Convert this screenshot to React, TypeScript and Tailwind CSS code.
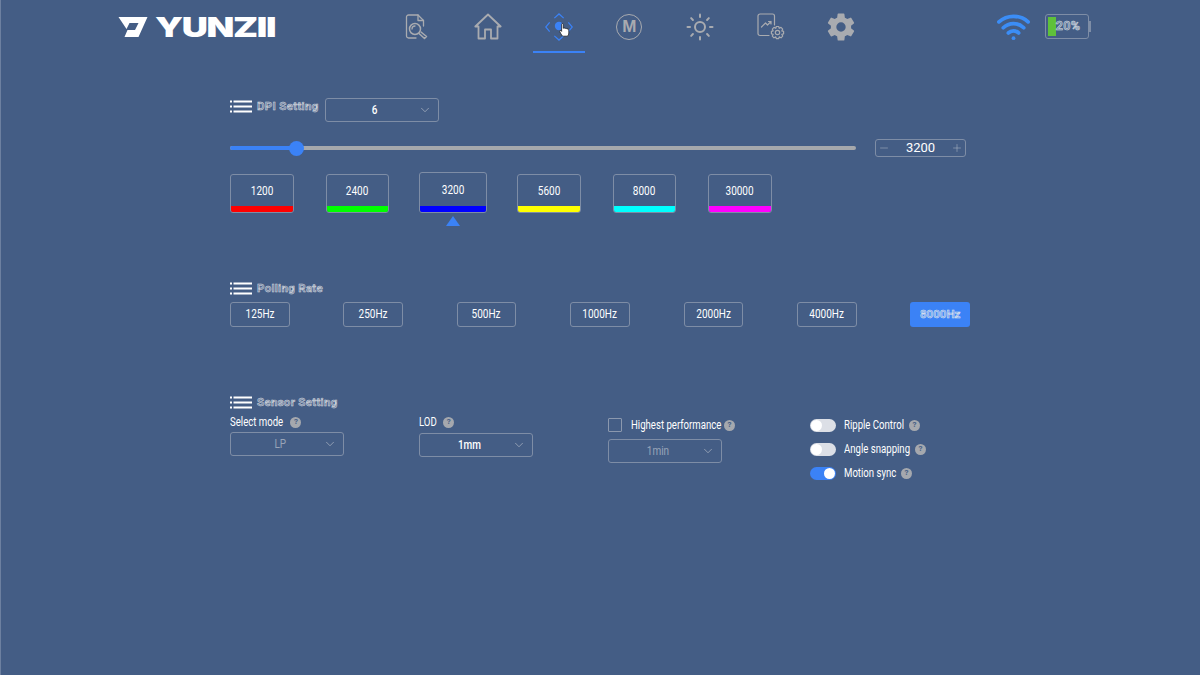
import { useState } from 'react';
import { ChevronDown, Minus, Plus, Sun, Wifi } from 'lucide-react';
import { IoSettingsSharp } from 'react-icons/io5';

const dpiLevels = [
  { value: '1200', color: 'bg-[#ff0000]' },
  { value: '2400', color: 'bg-[#00ff00]' },
  { value: '3200', color: 'bg-[#0000ff]', active: true },
  { value: '5600', color: 'bg-[#ffff00]' },
  { value: '8000', color: 'bg-[#00ffff]' },
  { value: '30000', color: 'bg-[#ff00ff]' },
];

const rates = ['125Hz', '250Hz', '500Hz', '1000Hz', '2000Hz', '4000Hz', '8000Hz'];

// the app's labels are a squeezed sans
function Narrow({ children, className = '' }: { children: React.ReactNode; className?: string }) {
  return <span className={`inline-block scale-x-[0.8] whitespace-nowrap ${className}`}>{children}</span>;
}

function MenuIcon() {
  return (
    <svg width="22" height="13" viewBox="0 0 22 13" fill="#fff" className="shrink-0">
      <rect x="0" y="0.5" width="2" height="2" />
      <rect x="3.5" y="0.5" width="18.5" height="2" />
      <rect x="0" y="5.5" width="2" height="2" />
      <rect x="3.5" y="5.5" width="18.5" height="2" />
      <rect x="0" y="10.5" width="2" height="2" />
      <rect x="3.5" y="10.5" width="18.5" height="2" />
    </svg>
  );
}

function SectionTitle({ label }: { label: string }) {
  return (
    <div className="flex items-center gap-[5px]">
      <MenuIcon />
      <span className="text-[11.5px] font-bold leading-none tracking-[0.3px] text-[#6f83a3] [-webkit-text-stroke:0.5px_#d5d8de]">
        {label}
      </span>
    </div>
  );
}

function Help() {
  return (
    <span className="flex h-[11px] w-[11px] shrink-0 items-center justify-center rounded-full bg-[#a5a8ae] text-[8px] font-bold leading-none text-[#445d85]">
      ?
    </span>
  );
}

function Select({ value, dim, className = '' }: { value: string; dim?: boolean; className?: string }) {
  return (
    <div className={`relative flex h-[24px] w-[114px] items-center justify-center rounded-[3px] border border-[#7e8da6] ${className}`}>
      <span className={`-ml-[14px] text-[12.500px] ${dim ? 'text-[#98a4b8]' : 'font-medium text-white'}`}>
        <Narrow>{value}</Narrow>
      </span>
      <ChevronDown size={14} strokeWidth={1} className="absolute right-[6px] top-[4px] text-[#c5cad3]" />
    </div>
  );
}

function Toggle({ on, label, labelWidth }: { on?: boolean; label: string; labelWidth: string }) {
  const [checked, setChecked] = useState(!!on);
  return (
    <div className="flex h-[24px] items-center">
      <button
        onClick={() => setChecked(!checked)}
        className={`flex h-[13px] w-[26px] items-center rounded-full px-[1px] ${checked ? 'justify-end bg-[#3b82f6]' : 'justify-start bg-[#dcdfe6]'}`}
      >
        <span className="h-[11px] w-[11px] rounded-full bg-white" />
      </button>
      <span className={`ml-[8px] text-[12px] text-white ${labelWidth}`}>
        <Narrow className="origin-left">{label}</Narrow>
      </span>
      <Help />
    </div>
  );
}

function ReportIcon() {
  return (
    <svg width="26" height="26" viewBox="0 0 26 26" fill="none" stroke="#a9abb0" strokeWidth="1.3" strokeLinecap="round" strokeLinejoin="round">
      <path d="M12 24H4.5A2 2 0 0 1 2.500 22V3A2 2 0 0 1 4.500 1H14L19.500 6.500V12" />
      <path d="M14 1V6.500H19.500" />
      <circle cx="11" cy="15" r="5.500" strokeWidth="1.500" />
      <path d="M8 15A3 3 0 0 1 11 12" />
      <path d="M15 19.500L20.500 24.500L22.500 22.500L17 18" strokeWidth="1.500" />
    </svg>
  );
}

function HomeIcon() {
  return (
    <svg width="28" height="27" viewBox="0 0 28 27" fill="none" stroke="#a9abb0" strokeWidth="1.800" strokeLinejoin="round">
      <path d="M1.300 13.500L14 1.500L26.700 13.500H23.500V25.500H17V16.500H11V25.500H4.500V13.500Z" />
    </svg>
  );
}

function DpiIcon() {
  return (
    <svg width="28" height="28" viewBox="0 0 30 30" fill="none" stroke="#3b82f6" strokeWidth="1.300">
      <path d="M10 5.500L15 1L20 5.500" />
      <path d="M5 10L0.800 15L5 20" />
      <path d="M25 10L29.200 15L25 20" />
      <path d="M10 24.500L15 29L20 24.500" />
      <circle cx="15" cy="14" r="4.500" fill="#3b82f6" stroke="none" />
    </svg>
  );
}

function HandCursor() {
  return (
    <svg width="11" height="14" viewBox="0 0 13 17" className="absolute left-[14px] top-[10px]">
      <path
        d="M3 1.500C3 .4 5 .4 5 1.500V6.500C5.500 5.800 7 5.800 7.300 6.800C7.800 6.200 9.300 6.300 9.500 7.400C10.200 6.900 11.700 7.200 11.700 8.500V12C11.700 14 10.700 16 9.700 16H5C3.500 16 3.300 14.500 2 12.800L.800 10.500C.3 9.500 1.500 8.500 2.300 9.300L3 10.200Z"
        fill="#fff"
        stroke="#1a1a1a"
        strokeWidth=".9"
      />
    </svg>
  );
}

function MIcon() {
  return (
    <div className="flex h-[26px] w-[26px] items-center justify-center rounded-full border-[1.5px] border-[#a9abb0] font-['Liberation_Sans',sans-serif] text-[17px] font-bold leading-none text-[#a9abb0]">
      M
    </div>
  );
}

function ChartGearIcon() {
  return (
    <svg width="28" height="27" viewBox="0 0 28 27" fill="none" stroke="#a9abb0" strokeWidth="1.200" strokeLinecap="round" strokeLinejoin="round">
      <path d="M12 22.500H3A2 2 0 0 1 1 20.500V3A2 2 0 0 1 3 1H15.500A2 2 0 0 1 17.500 3V12" />
      <path d="M4.500 14L8.500 10L10.500 12L14 8.500M11.500 8.500H14V11" />
      <circle cx="20.500" cy="19.500" r="2.200" />
      <path d="M19.300 13.500H21.700L22.200 15.300L24 14.400L25.700 16.100L24.800 17.900L26.600 18.400V20.800L24.800 21.300L25.700 23.100L24 24.800L22.200 23.900L21.700 25.700H19.300L18.800 23.900L17 24.800L15.300 23.100L16.200 21.300L14.400 20.800V18.400L16.200 17.900L15.300 16.100L17 14.400L18.800 15.300Z" />
    </svg>
  );
}

function Logo() {
  return (
    <div className="-ml-[1px] flex items-center">
      <svg width="30" height="20" viewBox="0 0 30 20" fill="#fff" fillRule="evenodd" className="shrink-0">
        <path d="M0.500 0H29.500L20.500 20H6.500L9.500 13H17L20.500 6H11.500L8.500 12Z" />
      </svg>
      <span className="ml-[7px] inline-block origin-left scale-x-[1.34] font-['Inter',sans-serif] text-[27px] font-black leading-none tracking-[-1px] text-white">
        YUNZII
      </span>
    </div>
  );
}

const navIcons = [
  <ReportIcon />,
  <HomeIcon />,
  <div className="relative">
    <DpiIcon />
    <HandCursor />
  </div>,
  <MIcon />,
  <Sun size={30} strokeWidth={1.6} className="text-[#a9abb0]" />,
  <ChartGearIcon />,
  <IoSettingsSharp size={30} className="text-[#a9abb0]" />,
];

export default function App() {
  return (
    <div className="h-[675px] w-[1200px] overflow-hidden border-l border-[#6d80a0] bg-[#445d85] font-['Roboto',sans-serif] text-white">
      {/* Top bar */}
      <header className="flex h-[54px] items-center pl-[118px]">
        <div className="w-[263px]">
          <Logo />
        </div>
        <nav className="flex">
          {navIcons.map((icon, i) => (
            <div key={i} className="relative flex h-[54px] w-[70.700px] items-center justify-center pb-[1px]">
              {icon}
              {i === 2 && <span className="absolute bottom-[1px] left-[10px] h-[2px] w-[52px] bg-[#3b82f6]" />}
            </div>
          ))}
        </nav>
        <Wifi size={35} strokeWidth={2.6} className="ml-[119px] -mt-[1px] text-[#3b8df6]" />
        <div className="relative ml-[14px] -mt-[2px] flex h-[25px] w-[44px] items-center rounded-[3px] border border-[#7e8da6] p-[2px]">
          <div className="h-full w-[8px] shrink-0 bg-[#5fc13a]" />
          <span className="text-[12.500px] font-bold tracking-[0.3px] text-[#6f83a3] [-webkit-text-stroke:0.5px_#dde0e5]">20%</span>
          <span className="absolute -right-[3px] top-[6px] h-[11px] w-[2px] bg-[#7e8da6]" />
        </div>
      </header>

      <main className="ml-[229px] w-[740px]">
        {/* DPI */}
        <div className="mt-[44px] flex items-start gap-[6px]">
          <div className="pt-[2px]">
            <SectionTitle label="DPI Setting" />
          </div>
          <Select value="6" />
        </div>
        <div className="mt-[17px] flex items-center">
          <div className="relative h-[4px] w-[626px] shrink-0 rounded-full bg-[#a6a8ac]">
            <div className="h-full w-[66px] rounded-full bg-[#3b82f6]" />
            <span className="absolute left-[59px] top-[-5.500px] h-[15px] w-[15px] rounded-full bg-[#3b82f6]" />
          </div>
          <div className="ml-[19px] flex h-[18px] w-[91px] shrink-0 items-center justify-between rounded-[3px] border border-[#7e8da6] px-[2px]">
            <Minus size={12} strokeWidth={1} className="text-[#b5bcc8]" />
            <span className="text-[13px]">3200</span>
            <Plus size={12} strokeWidth={1} className="text-[#b5bcc8]" />
          </div>
        </div>
        <div className="mt-[17px] flex items-start gap-[32px]">
          {dpiLevels.map((level) => (
            <div key={level.value} className={`relative ${level.active ? '-ml-[2px] -mr-[2px] -mt-[2px]' : ''}`}>
              <div
                className={`flex flex-col overflow-hidden rounded-[3px] border border-[#7e8da6] ${
                  level.active ? 'h-[41px] w-[68px]' : 'h-[39px] w-[63.500px]'
                }`}
              >
                <div className="flex flex-1 items-center justify-center pt-[1px] text-[12.500px]">
                  <Narrow>{level.value}</Narrow>
                </div>
                <div className={`h-[6px] ${level.color}`} />
              </div>
              {level.active && (
                <span className="absolute left-[27px] top-[44px] h-0 w-0 border-x-[7px] border-b-[10px] border-x-transparent border-b-[#3b82f6]" />
              )}
            </div>
          ))}
        </div>

        {/* Polling rate */}
        <div className="mt-[69px]">
          <SectionTitle label="Polling Rate" />
        </div>
        <div className="mt-[7px] flex justify-between">
          {rates.map((rate, i) => {
            const active = i === rates.length - 1;
            return (
              <div
                key={rate}
                className={`flex h-[25px] w-[59.500px] items-center justify-center rounded-[3px] text-[12.500px] ${
                  active ? 'bg-[#3b82f6]' : 'border border-[#7e8da6]'
                }`}
              >
                {active ? (
                  <span className="text-[11.500px] font-bold text-[#76a4f0] [-webkit-text-stroke:0.5px_#dde3ee]">{rate}</span>
                ) : (
                  <Narrow>{rate}</Narrow>
                )}
              </div>
            );
          })}
        </div>

        {/* Sensor */}
        <div className="mt-[69px]">
          <SectionTitle label="Sensor Setting" />
        </div>
        <div className="flex items-start">
          <div className="w-[189px] pt-[6px]">
            <div className="flex h-[14px] items-center text-[12px]">
              <Narrow className="origin-left -mr-[6px]">Select mode</Narrow>
              <Help />
            </div>
            <Select value="LP" dim className="mt-[3px]" />
          </div>
          <div className="w-[189px] pt-[6px]">
            <div className="flex h-[14px] items-center gap-[5px] text-[12px]">
              <Narrow className="origin-left -mr-[3px]">LOD</Narrow>
              <Help />
            </div>
            <Select value="1mm" className="mt-[4px]" />
          </div>
          <div className="w-[202px] pt-[6px]">
            <div className="flex h-[20px] items-center">
              <span className="h-[14px] w-[14px] rounded-[1px] border border-[#8b98ae]" />
              <span className="ml-[9px] mr-[5px] w-[88px] text-[12px]">
                <Narrow className="origin-left">Highest performance</Narrow>
              </span>
              <Help />
            </div>
            <Select value="1min" dim className="mt-[4px]" />
          </div>
          <div className="mt-[4px]">
            <Toggle label="Ripple Control" labelWidth="w-[65px]" />
            <Toggle label="Angle snapping" labelWidth="w-[71px]" />
            <Toggle on label="Motion sync" labelWidth="w-[57px]" />
          </div>
        </div>
      </main>
    </div>
  );
}
